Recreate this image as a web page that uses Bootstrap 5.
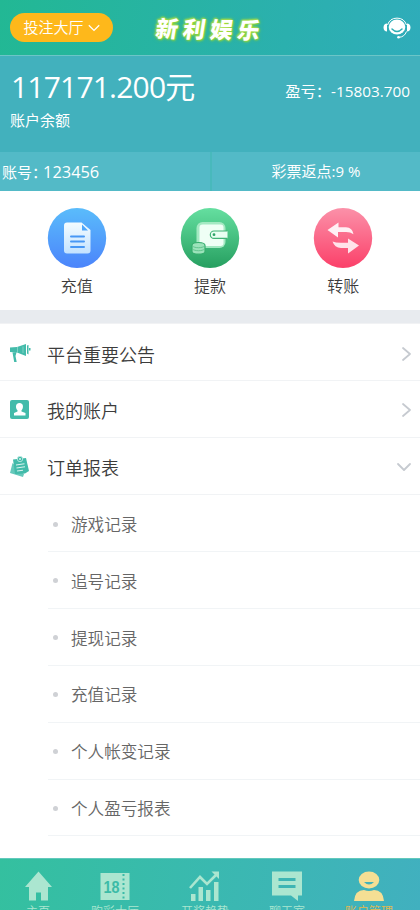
<!DOCTYPE html>
<html lang="zh-CN">
<head>
<meta charset="utf-8">
<meta name="viewport" content="width=device-width, initial-scale=1">
<title>新利娱乐</title>
<link href="https://cdn.jsdelivr.net/npm/bootstrap@5.3.0/dist/css/bootstrap.min.css" rel="stylesheet">
<style>
body{font-family:"Open Sans","Noto Sans CJK SC",sans-serif;font-weight:350;height:910px;overflow:hidden;color:#3c3c3c;background:#fff;line-height:1}
.topbar{height:55px;background:linear-gradient(100deg,#22b894 0%,#29b2a8 52%,#2facba 100%);padding:0 9px 0 10px}
.hall{width:103px;height:29px;background:#feb81b;font-size:15px;font-weight:350;color:#fff;border:0;line-height:1}
.brand-text{font-size:22.5px;font-weight:900;color:#fff;letter-spacing:4.8px;transform:skewX(-8deg) rotate(1deg);text-shadow:0 0 2px #a5dc32,1px 1px 2px #8fd53b,-1px -1px 2px #b9e34b,0 0 4px #6fc94b;line-height:30px;padding-top:4px}
.side{width:120px}
.balance{height:97px;background:#42b1bd;border-top:1px solid #6cc5c7;color:#fff;padding:0 10px 0 11px;font-weight:400}
.amount{font-size:30px;letter-spacing:-.8px;line-height:36px;padding-top:13px}
.amount-label{font-size:15px;line-height:20px;margin:5px 0 0 -1px}
.profit{font-size:15.3px;line-height:20px;padding-top:25px}
.account{height:39px;background:#53bac7;color:#fff;font-size:15px;line-height:39px;font-weight:400}
.account>div:first-child{border-right:2px solid #48b9bc;padding-left:2px;width:212px}
.account>div:last-child{width:208px}
.account .num{font-size:16.4px;margin-left:-4px}
.quick{height:119px;padding:17px 10px 0}
.quick svg{display:block;width:60px;height:60px}
.quick span{font-size:16px;line-height:20px;margin-top:8px}
.band{height:14px;background:#e8ebef;border-bottom:1px solid #f1f2f4}
.menu-list{padding-top:.7px}
.menu-line{height:56.8px;border-bottom:1px solid #f1f3f5;padding:2px 8px 0 9px;font-size:18px}
.menu-line span{padding-top:2px}
.menu-line .ico{width:22px;height:22px;margin-right:16px}
.sub-line{height:56.9px;margin-left:48px;border-bottom:1px solid #f1f4f6;font-size:16.6px;color:#666;padding:4px 0 0 5px}
.dot{width:5px;height:5px;background:#cfd1d5;margin-right:13px;margin-top:-2px}
.tabs{height:52px;background:linear-gradient(100deg,#34c09f 0%,#3ab9b0 50%,#41b0bf 100%);grid-template-columns:76px 78px 102px 62px 102px;border-top:1px solid #62c9bc;color:#abe6d0;font-size:12px;overflow:hidden}
.tabs svg{width:32px;height:32px;margin-top:11px;flex:none}
.tabs span{line-height:14px;margin-top:3px;white-space:nowrap}
.tabs .gold{color:#e5b94d}
.chev{fill:none;stroke:#c6cad0;stroke-width:1.8;stroke-linecap:round;stroke-linejoin:round}
.screen{height:910px}
</style>
</head>
<body>
<div class="screen d-flex flex-column overflow-hidden">
<header class="topbar d-flex align-items-center justify-content-between flex-shrink-0">
  <div class="side"><button class="hall rounded-pill d-flex align-items-center justify-content-center gap-1 p-0">投注大厅<svg width="12" height="8" viewBox="0 0 12 8" fill="none" stroke="#fff" stroke-width="1.3"><path d="M.8 1.2 6 6.4l5.200-5.200"/></svg></button></div>
  <div class="brand-text text-nowrap">新利娱乐</div>
  <div class="side d-flex justify-content-end">
    <svg width="28" height="24" viewBox="0 0 28 24"><path d="M4.500 9A10 10 0 0 1 23.500 9" fill="none" stroke="#fff" stroke-width="1"/><ellipse cx="14" cy="11" rx="8.300" ry="7.500" fill="#fff"/><path d="M4 7.500v8C2 15.500.5 14 .5 11.500s1.500-4 3.500-4zM24 7.500v8c2 0 3.500-1.500 3.500-4s-1.500-4-3.500-4z" fill="#fff"/><path d="M9 13q5 5 10 0" fill="none" stroke="#2eaeb4" stroke-width="1.500" stroke-linecap="round"/><path d="M23.500 15.500Q21.500 21 16 21.300" fill="none" stroke="#fff" stroke-width="1"/><circle cx="15.500" cy="21.300" r="1.300" fill="#fff"/></svg>
  </div>
</header>
<section class="balance d-flex justify-content-between flex-shrink-0">
  <div><div class="amount">117171.200元</div><div class="amount-label">账户余额</div></div>
  <div class="profit text-nowrap">盈亏：-15803.700</div>
</section>
<section class="account d-flex flex-shrink-0">
  <div>账号：<span class="num">123456</span></div>
  <div class="text-center">彩票返点:9 %</div>
</section>
<section class="quick row g-0 flex-shrink-0">
  <div class="col-4 d-flex flex-column align-items-center">
    <svg viewBox="0 0 60 60"><defs><linearGradient id="blue" x2="0" y2="1"><stop stop-color="#5abcfb"/><stop offset="1" stop-color="#4b84fb"/></linearGradient><linearGradient id="paper" x2="0" y2="1"><stop stop-color="#f4fcff"/><stop offset="1" stop-color="#c3e2ff"/></linearGradient></defs><ellipse cx="30" cy="30" rx="29.200" ry="30" fill="url(#blue)"/><path d="M20 14.500h14.500l9 7.500v20.500a3 3 0 0 1-3 3H20a3 3 0 0 1-3-3v-25a3 3 0 0 1 3-3z" fill="url(#paper)"/><path d="M35 16.500v6h6z" fill="#4ea6fb"/><path d="M24 28.500h13M24 33.500h13M24 39h13" stroke="#4797f5" stroke-width="2" stroke-linecap="round"/></svg>
    <span>充值</span></div>
  <div class="col-4 d-flex flex-column align-items-center">
    <svg viewBox="0 0 60 60"><defs><linearGradient id="green" x2="0" y2="1"><stop stop-color="#65dfa0"/><stop offset="1" stop-color="#269f60"/></linearGradient></defs><ellipse cx="30" cy="30" rx="29.200" ry="30" fill="url(#green)"/><rect x="16.500" y="14" width="29" height="26" rx="6" fill="#a4e9c2"/><rect x="19.500" y="16.500" width="24" height="21.500" rx="3" fill="#effff5"/><path d="M47.500 23H34a3.700 3.700 0 0 0 0 7.400h13.500" fill="#e9fff2" stroke="#42b477" stroke-width="1.200"/><circle cx="34" cy="26.700" r="1.400" fill="#2fa468"/><path d="M12 37.500c0-4 13-4 13 0v6c0 3.500-13 3.500-13 0z" fill="#9ce3bb" stroke="#36ad6d" stroke-width="1.200"/><path d="M12.500 38c2 2.300 10 2.300 12 0M12.500 41c2 2.300 10 2.300 12 0" fill="none" stroke="#54bd83" stroke-width=".8"/></svg>
    <span>提款</span></div>
  <div class="col-4 d-flex flex-column align-items-center">
    <svg viewBox="0 0 60 60"><defs><linearGradient id="pink" x2="0" y2="1"><stop stop-color="#fb91a9"/><stop offset="1" stop-color="#fb4069"/></linearGradient></defs><ellipse cx="30" cy="30" rx="29.200" ry="30" fill="url(#pink)"/><path d="M14.500 22 25.500 14.500v4.800H33q6.500.3 7.500 7-3-2.300-7.500-2.300h-8v5.500z" fill="#fff0f4"/><path d="M46 37.500 35 30.500v4.300H28q-5.500 0-8.500-1.300 2 6 8.500 6.500h7v5.500z" fill="#ffe3ea"/></svg>
    <span>转账</span></div>
</section>
<div class="band flex-shrink-0"></div>
<main class="menu-list flex-grow-1 overflow-hidden">
  <div class="menu-line d-flex align-items-center"><svg class="ico" viewBox="0 0 22 22" fill="#43bbaa"><path d="M1 4.500 8 4v5.500L1 9zM8 4l9-3v12L8 9.500zM18 2.500l1.500-.5v9.500L18 10.500zM3.500 9.500h4L6.500 13l1.200 6H5.200z"/><path d="M20 5h1.500v2.500H20z"/><path d="M8.500 4v5.500M14 3.500v6.500" stroke="#8fd8cc" stroke-width=".8"/></svg><span>平台重要公告</span><svg class="ms-auto chev" width="12" height="16" viewBox="0 0 12 16"><path d="M3 2l7 6-7 6"/></svg></div>
  <div class="menu-line d-flex align-items-center"><svg class="ico" viewBox="0 0 22 22"><rect x="1" y="1" width="19" height="19" rx="2" fill="#43bbaa"/><path d="M10.500 4c4.500 0 4 5.500 2 7.300v1.200l4 1.500v2.500H5V14l3.500-1.500v-1.200C6.500 9.500 6 4 10.500 4z" fill="#fff"/></svg><span>我的账户</span><svg class="ms-auto chev" width="12" height="16" viewBox="0 0 12 16"><path d="M3 2l7 6-7 6"/></svg></div>
  <div class="menu-line d-flex align-items-center"><svg class="ico" viewBox="0 0 22 22"><path d="M3.500 7 1 17l13 4 1-3z" fill="#65c9bb"/><path d="m4 3.500 13-1.500L20 15l-4 2.500-10 .5z" fill="#43bbaa"/><circle cx="11" cy="3" r="2.700" fill="#43bbaa" stroke="#c8eee7" stroke-width=".8"/><circle cx="11" cy="3" r="1" fill="#d8f3ee"/><path d="m7 9 8.500-1.200M7.500 12l8.500-1.200M8 15l6-.7" stroke="#d8f3ee" stroke-width="1.100"/></svg><span>订单报表</span><svg class="ms-auto chev" width="16" height="12" viewBox="0 0 16 12"><path d="M2 3l6 6 6-6"/></svg></div>
  <div class="sub-line d-flex align-items-center"><i class="dot rounded-circle"></i>游戏记录</div>
  <div class="sub-line d-flex align-items-center"><i class="dot rounded-circle"></i>追号记录</div>
  <div class="sub-line d-flex align-items-center"><i class="dot rounded-circle"></i>提现记录</div>
  <div class="sub-line d-flex align-items-center"><i class="dot rounded-circle"></i>充值记录</div>
  <div class="sub-line d-flex align-items-center"><i class="dot rounded-circle"></i>个人帐变记录</div>
  <div class="sub-line d-flex align-items-center"><i class="dot rounded-circle"></i>个人盈亏报表</div>
</main>
<nav class="tabs d-grid flex-shrink-0">
  <div class="d-flex flex-column align-items-center"><svg viewBox="0 0 32 32" fill="#abe6d0"><path d="M16.500 1.500 3 17h4v13.500h7v-8h5v8h7V17h4z"/></svg><span>主页</span></div>
  <div class="d-flex flex-column align-items-center"><svg viewBox="0 0 32 32"><path d="M1.500 3h29v27h-29z" fill="#abe6d0"/><path d="M24.500 4v25" stroke="#3bbba7" stroke-width="2" stroke-dasharray="2 2.500"/><text x="4.500" y="22.500" font-family="Liberation Sans, sans-serif" font-weight="700" font-size="17" textLength="16" lengthAdjust="spacingAndGlyphs" fill="#3bbba7">18</text></svg><span>购彩大厅</span></div>
  <div class="d-flex flex-column align-items-center"><svg viewBox="0 0 32 32" fill="#abe6d0"><path d="M2 24h4.500v7H2zM9.500 17H14v14H9.500zM17 20h4.500v11H17zM25 12h4.500v19H25z"/><path d="m1 18 10-11 7 7L28 4" fill="none" stroke="#abe6d0" stroke-width="2.600"/><path d="M22.500 1.500H30V9z"/></svg><span>开奖趋势</span></div>
  <div class="d-flex flex-column align-items-center"><svg viewBox="0 0 32 32"><path d="M1 1.500h30v24h-4V31l-7-5.500H1z" fill="#abe6d0"/><path d="M7.500 9.500h17M7.500 16.500h17" stroke="#3db5b4" stroke-width="3"/></svg><span>聊天室</span></div>
  <div class="gold d-flex flex-column align-items-center"><svg viewBox="0 0 32 32" fill="#f5df94"><ellipse cx="16" cy="10" rx="10.300" ry="8.500"/><path d="M1 31q1-11 10-11 5 2 10 0 9 0 10 11z"/><path d="M11 12h10q-5 5-10 0z" fill="#41b2ba"/></svg><span>账户管理</span></div>
</nav>
</div>
<script src="https://cdn.jsdelivr.net/npm/bootstrap@5.3.0/dist/js/bootstrap.bundle.min.js"></script>
</body>
</html>
